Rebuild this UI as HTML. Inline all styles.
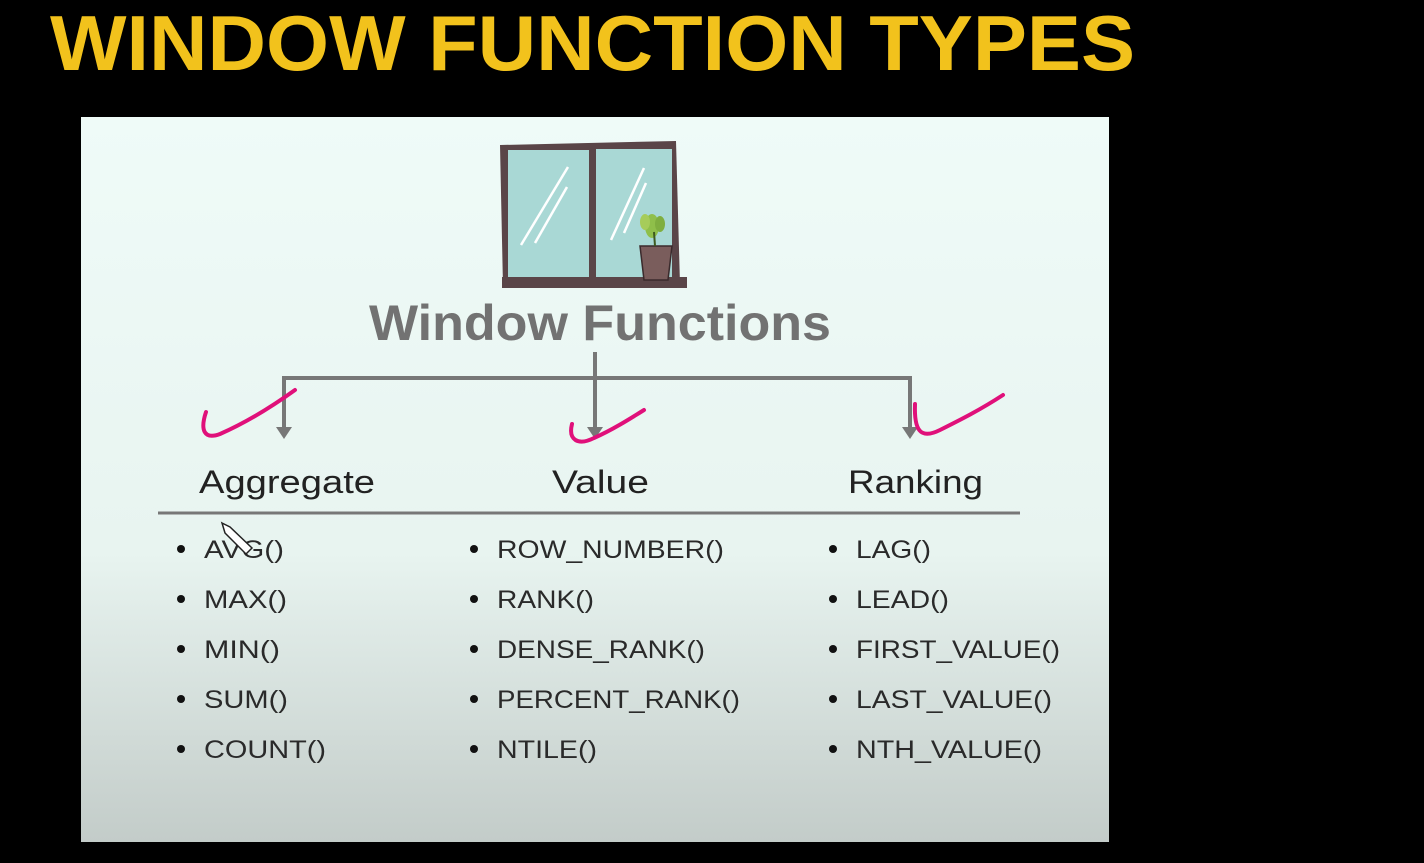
<!DOCTYPE html>
<html><head><meta charset="utf-8"><style>
html,body{margin:0;padding:0;background:#000;width:1424px;height:863px;overflow:hidden}
svg{display:block}
</style></head><body>
<svg width="1424" height="863" viewBox="0 0 1424 863" xmlns="http://www.w3.org/2000/svg">
<defs>
<linearGradient id="bg" x1="0" y1="0" x2="0" y2="1">
<stop offset="0" stop-color="#effbf8"/>
<stop offset="0.6" stop-color="#e8f4f0"/>
<stop offset="1" stop-color="#c3ccc9"/>
</linearGradient>
</defs>
<rect width="1424" height="863" fill="#000"/>
<text x="50" y="70" font-family="Liberation Sans, sans-serif" font-weight="bold" font-size="78" fill="#f2c21c" textLength="1085" lengthAdjust="spacingAndGlyphs">WINDOW FUNCTION TYPES</text>
<rect x="81" y="117" width="1028" height="725" fill="url(#bg)"/>
<g>
<polygon points="500,145 676,141 680,285 503,287" fill="#5a4548"/>
<rect x="508" y="150" width="81" height="128" fill="#a9d8d5"/>
<rect x="596" y="149" width="76" height="128" fill="#a9d8d5"/>
<line x1="568" y1="167" x2="521" y2="245" stroke="#fff" stroke-width="2.5"/>
<line x1="567" y1="187" x2="535" y2="243" stroke="#fff" stroke-width="2.5"/>
<line x1="644" y1="168" x2="611" y2="240" stroke="#fff" stroke-width="2.5"/>
<line x1="646" y1="183" x2="624" y2="233" stroke="#fff" stroke-width="2.5"/>
<rect x="502" y="277" width="185" height="11" fill="#5a4548"/>
<polygon points="640,246 672,246 668,280 644,280" fill="#7a5d5c" stroke="#3a2a2c" stroke-width="1.5"/>
<ellipse cx="652" cy="226" rx="7" ry="12" fill="#8fbf4a"/>
<ellipse cx="645" cy="222" rx="5" ry="8" fill="#a6cc5a"/>
<ellipse cx="660" cy="224" rx="5" ry="8" fill="#7fae3f"/>
<line x1="654" y1="232" x2="655" y2="246" stroke="#3e5a20" stroke-width="2"/>
</g>
<text x="369" y="340" font-family="Liberation Sans, sans-serif" font-weight="bold" font-size="50" fill="#727272" textLength="462" lengthAdjust="spacingAndGlyphs">Window Functions</text>
<g stroke="#777" stroke-width="4" fill="none">
<polyline points="284,428 284,378 910,378 910,428"/>
<line x1="595" y1="352" x2="595" y2="428"/>
<line x1="158" y1="513" x2="1020" y2="513" stroke-width="3"/>
</g>
<g fill="#777">
<polygon points="276,427 292,427 284,439"/>
<polygon points="587,427 603,427 595,439"/>
<polygon points="902,427 918,427 910,439"/>
</g>
<g stroke="#e0107a" stroke-width="4" fill="none" stroke-linecap="round">
<path d="M206,412 C200,430 204,440 220,434 C245,423 270,408 295,390"/>
<path d="M572,424 C568,440 578,446 594,438 C612,430 628,420 644,410"/>
<path d="M915,404 C914,430 920,440 940,430 C960,420 980,410 1003,395"/>
</g>
<g font-family="Liberation Sans, sans-serif" font-size="32" fill="#222">
<text x="199" y="493" textLength="176" lengthAdjust="spacingAndGlyphs">Aggregate</text>
<text x="552" y="493" textLength="97" lengthAdjust="spacingAndGlyphs">Value</text>
<text x="848" y="493" textLength="135" lengthAdjust="spacingAndGlyphs">Ranking</text>
</g>
<g fill="#111">
<circle cx="181" cy="549" r="4"/><circle cx="181" cy="599" r="4"/><circle cx="181" cy="649" r="4"/><circle cx="181" cy="699" r="4"/><circle cx="181" cy="749" r="4"/>
<circle cx="474" cy="549" r="4"/><circle cx="474" cy="599" r="4"/><circle cx="474" cy="649" r="4"/><circle cx="474" cy="699" r="4"/><circle cx="474" cy="749" r="4"/>
<circle cx="833" cy="549" r="4"/><circle cx="833" cy="599" r="4"/><circle cx="833" cy="649" r="4"/><circle cx="833" cy="699" r="4"/><circle cx="833" cy="749" r="4"/>
</g>
<g font-family="Liberation Sans, sans-serif" font-size="25" fill="#2a2a2a">
<text x="204" y="558" textLength="80" lengthAdjust="spacingAndGlyphs">AVG()</text>
<text x="204" y="608" textLength="83" lengthAdjust="spacingAndGlyphs">MAX()</text>
<text x="204" y="658" textLength="76" lengthAdjust="spacingAndGlyphs">MIN()</text>
<text x="204" y="708" textLength="84" lengthAdjust="spacingAndGlyphs">SUM()</text>
<text x="204" y="758" textLength="122" lengthAdjust="spacingAndGlyphs">COUNT()</text>
<text x="497" y="558" textLength="227" lengthAdjust="spacingAndGlyphs">ROW_NUMBER()</text>
<text x="497" y="608" textLength="97" lengthAdjust="spacingAndGlyphs">RANK()</text>
<text x="497" y="658" textLength="208" lengthAdjust="spacingAndGlyphs">DENSE_RANK()</text>
<text x="497" y="708" textLength="243" lengthAdjust="spacingAndGlyphs">PERCENT_RANK()</text>
<text x="497" y="758" textLength="100" lengthAdjust="spacingAndGlyphs">NTILE()</text>
<text x="856" y="558" textLength="75" lengthAdjust="spacingAndGlyphs">LAG()</text>
<text x="856" y="608" textLength="93" lengthAdjust="spacingAndGlyphs">LEAD()</text>
<text x="856" y="658" textLength="204" lengthAdjust="spacingAndGlyphs">FIRST_VALUE()</text>
<text x="856" y="708" textLength="196" lengthAdjust="spacingAndGlyphs">LAST_VALUE()</text>
<text x="856" y="758" textLength="186" lengthAdjust="spacingAndGlyphs">NTH_VALUE()</text>
</g>
<g stroke="#222" stroke-width="1.5" fill="#fff">
<polygon points="222,523 230,527 252,548 246,554 225,533"/>
</g>
</svg>
</body></html>
